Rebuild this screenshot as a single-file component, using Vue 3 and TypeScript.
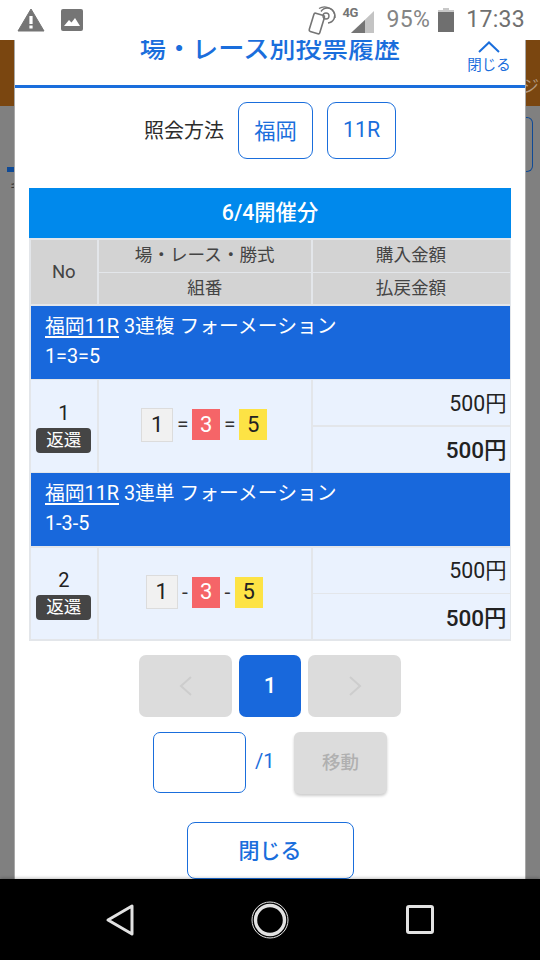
<script setup lang="ts">
interface Row { no: number; kind: string; combo: string; sep: string }
const rows: Row[] = [
  { no: 1, kind: '3連複', combo: '1=3=5', sep: '=' },
  { no: 2, kind: '3連単', combo: '1-3-5', sep: '-' },
]
</script>

<template>
  <div class="phone">
    <header class="status">
      <div class="status-left">
        <svg class="warn" width="28" height="24" viewBox="0 0 28 24"><path d="M14 1 L27 23 H1 Z" fill="#757575" stroke="#757575" stroke-linejoin="round"/><rect x="12.4" y="8" width="3.2" height="8" fill="#fff"/><rect x="12.4" y="17.5" width="3.2" height="3" fill="#fff"/></svg>
        <svg width="22" height="22" viewBox="0 0 22 22"><rect width="22" height="22" rx="2" fill="#757575"/><path d="M3 17 L8 11 L10.5 13.5 L14 9 L19 17 Z" fill="#fff"/></svg>
      </div>
      <div class="status-right">
        <svg class="nfc" width="30" height="30" viewBox="0 0 30 30" fill="none" stroke="#757575"><rect x="4.5" y="8" width="11" height="19" rx="1.5" transform="rotate(17 10 17)" stroke-width="1.6"/><circle cx="19" cy="10" r="3" stroke-width="1.4"/><path d="M14 5.5 A7.5 7.5 0 1 1 21 17" stroke-width="1.4"/><path d="M12 2.5 A10.5 10.5 0 0 1 28 12" stroke-width="1.2"/></svg>
        <div class="signal">
          <span class="lte">4G</span>
          <svg width="23" height="22" viewBox="0 0 23 22"><path d="M23 0 V22 H0 Z" fill="#c4c4c4"/><path d="M14 9 V22 H0 Z" fill="#757575"/></svg>
        </div>
        <span class="pct">95%</span>
        <svg width="16" height="24" viewBox="0 0 16 24"><rect x="5" width="6" height="3" fill="#c8c8c8"/><rect y="2" width="16" height="3" fill="#c8c8c8"/><rect y="4" width="16" height="20" fill="#6f6f6f"/></svg>
        <span class="time">17:33</span>
      </div>
    </header>

    <main class="page">
      <div class="hero"><span class="hero-text">ジ</span></div>
      <div class="under">
        <div class="under-left"><i class="mark"></i><span class="mark-text">キ</span></div>
        <div class="under-box"></div>
      </div>

      <section class="modal">
        <div class="modal-head">
          <h1 class="title">場・レース別投票履歴</h1>
          <button class="head-close">
            <svg width="22" height="12" viewBox="0 0 22 12" fill="none"><path d="M1 11 L11 1.5 L21 11" stroke="#1a6edc" stroke-width="2"/></svg>
            <span>閉じる</span>
          </button>
        </div>

        <div class="filter">
          <span class="filter-label">照会方法</span>
          <button class="filter-btn wide">福岡</button>
          <button class="filter-btn narrow">11R</button>
        </div>

        <h2 class="table-title">6/4開催分</h2>
        <div class="table">
          <div class="th no-head">No</div>
          <div class="th">場・レース・勝式</div>
          <div class="th">購入金額</div>
          <div class="th">組番</div>
          <div class="th">払戻金額</div>

          <template v-for="r in rows" :key="r.no">
            <div class="race">
              <div><u>福岡11R</u> {{ r.kind }} フォーメーション</div>
              <div>{{ r.combo }}</div>
            </div>
            <div class="td no-cell">
              <span class="no">{{ r.no }}</span>
              <span class="badge">返還</span>
            </div>
            <div class="td combo" :class="r.sep === '=' ? 'eq' : 'dash'">
              <span class="box b1">1</span>
              <span class="sep">{{ r.sep }}</span>
              <span class="box b3">3</span>
              <span class="sep">{{ r.sep }}</span>
              <span class="box b5">5</span>
            </div>
            <div class="td money">500円</div>
            <div class="td money strong">500円</div>
          </template>
        </div>

        <nav class="pager">
          <button class="pg arrow">
            <svg width="14" height="22" viewBox="0 0 14 22" fill="none"><path d="M12 2 L2 11 L12 20" stroke="#cdcdcd" stroke-width="2"/></svg>
          </button>
          <button class="pg current">1</button>
          <button class="pg arrow">
            <svg width="14" height="22" viewBox="0 0 14 22" fill="none"><path d="M2 2 L12 11 L2 20" stroke="#cdcdcd" stroke-width="2"/></svg>
          </button>
        </nav>

        <div class="jump">
          <div class="jump-input"></div>
          <span class="jump-total">/1</span>
          <button class="jump-btn">移動</button>
        </div>

        <button class="close-btn">閉じる</button>
      </section>
    </main>

    <footer class="nav">
      <div class="nav-slot">
        <svg width="30" height="34" viewBox="0 0 30 34" fill="none"><path d="M27 3 V31 L3 17 Z" stroke="#e2e2e2" stroke-width="3" stroke-linejoin="round"/></svg>
      </div>
      <div class="nav-slot">
        <svg width="38" height="38" viewBox="0 0 38 38" fill="none"><circle cx="19" cy="19" r="18" stroke="#e8e8e8" stroke-width="1"/><circle cx="19" cy="19" r="14.5" stroke="#e2e2e2" stroke-width="3.4"/></svg>
      </div>
      <div class="nav-slot">
        <svg width="28" height="30" viewBox="0 0 28 30" fill="none"><rect x="1.5" y="1.5" width="25" height="26" rx="1.5" stroke="#e2e2e2" stroke-width="3"/></svg>
      </div>
    </footer>
  </div>
</template>

<style>
html, body { margin: 0; padding: 0; }
</style>

<style scoped>
* { box-sizing: border-box; }
button { font-family: inherit; padding: 0; margin: 0; background: none; border: 0; }
.phone {
  width: 540px; height: 960px; display: flex; flex-direction: column; overflow: hidden;
  font-family: Roboto, "Noto Sans CJK JP", sans-serif; background: #fff;
}
.status {
  height: 40px; flex: none; display: flex; justify-content: space-between; align-items: center;
  padding: 0 15px 0 17px; background: #fff; font-family: Roboto, sans-serif;
}
.status-left { display: flex; align-items: center; gap: 16px; }
.status-right { display: flex; align-items: center; }
.nfc { margin-right: 7px; margin-top: 1px; }
.signal { position: relative; width: 30px; height: 26px; margin-right: 13px; display: flex; justify-content: flex-end; align-items: flex-end; }
.lte { position: absolute; left: -1px; top: -1px; font-size: 13px; line-height: 13px; font-weight: 700; color: #757575; letter-spacing: -.5px; }
.pct { font-size: 23px; line-height: 26px; color: #858585; margin-right: 8px; letter-spacing: .3px; }
.time { font-size: 23px; line-height: 26px; color: #707070; margin-left: 12px; letter-spacing: .3px; }

.page { position: relative; flex: 1; min-height: 0; background: #808080; display: flex; flex-direction: column; }
.hero { height: 66px; background: #7a4610; display: flex; justify-content: flex-end; align-items: flex-end; }
.hero-text { font-size: 17px; line-height: 24px; color: #b49a80; padding: 0 1px 8px 0; }
.under { display: flex; justify-content: space-between; padding: 11px 7px 0 7px; }
.under-left { display: flex; flex-direction: column; align-items: flex-start; padding-top: 50px; }
.mark { display: block; width: 7px; height: 5px; background: #0f4a96; }
.mark-text { font-size: 12px; line-height: 18px; color: #333; margin: 6px 0 0 3px; }
.under-box { width: 7px; height: 55px; border: 1.5px solid #0f4a96; border-left: 0; border-radius: 0 6px 6px 0; }

.modal {
  position: absolute; left: 14px; right: 14px; top: 0; bottom: 0; background: #fff; overflow: hidden;
  display: flex; flex-direction: column; align-items: center; border-left: 1px solid #a8a8a8; border-right: 1px solid #a8a8a8;
}
.modal-head {
  width: 100%; height: 48px; flex: none; position: relative; display: flex; justify-content: center;
  border-bottom: 3px solid #1a6edc;
}
.title { margin: -9px 0 0; font-size: 26.2px; line-height: 36px; font-weight: 500; color: #1a6edc; white-space: nowrap; }
.head-close {
  position: absolute; top: 1px; right: 14px; width: 44px; display: flex; flex-direction: column; align-items: center;
  gap: 3px; color: #1a6edc; font-size: 14.5px; line-height: 20px;
}
.filter { width: 100%; display: flex; align-items: center; justify-content: center; margin-top: 14px; }
.filter-label { font-size: 20px; line-height: 30px; color: #2c2c2c; margin-right: 14px; }
.filter-btn {
  height: 57px; padding-bottom: 3px; border: 1.5px solid #1a6edc; border-radius: 9px; color: #1a6edc; font-size: 21.3px; background: #fff;
}
.wide { width: 75px; margin-right: 14px; }
.narrow { width: 69px; }

.table-title {
  width: 482px; height: 50px; flex: none; margin: 29px 0 0; background: #0089ec; color: #fff;
  font-size: 21.3px; font-weight: 500; line-height: 50px; text-align: center;
}
.table {
  width: 482px; flex: none; display: grid; background: #e3e6ea; padding: 1.5px; gap: 1.5px;
  grid-template-columns: 66.5px 212.5px 1fr;
  grid-template-rows: 32px 31px 73px 45px 45px 73px 45px 45px;
}
.th {
  background: #d3d3d3; color: #444; font-size: 17.6px; display: flex; align-items: center; justify-content: center; line-height: 1;
}
.no-head { grid-row: span 2; font-size: 18.5px; }
.race {
  grid-column: 1 / -1; background: #1868dc; color: #fff; padding: 6px 0 0 14.5px; font-size: 19.8px; line-height: 30px;
}
.race u { text-underline-offset: 3px; text-decoration-thickness: 1.5px; }
.td { background: #eaf2fe; color: #222; }
.no-cell { grid-row: span 2; display: flex; flex-direction: column; align-items: center; justify-content: center; padding-top: 1px; }
.no { font-size: 20px; line-height: 26px; }
.badge {
  width: 55px; height: 25px; margin-top: 2px; background: #454545; border-radius: 4px; color: #fff;
  font-size: 17.6px; line-height: 24px; text-align: center;
}
.combo { grid-row: span 2; display: flex; align-items: center; justify-content: center; padding: 0 1px 2px 0; }
.box { display: flex; align-items: center; justify-content: center; font-size: 22px; line-height: 1; height: 31px; width: 28px; }
.b1 { width: 32px; height: 34px; background: #f1f1f1; border: 1.5px solid #dcdcdc; }
.b3 { background: #f56568; color: #fff; }
.b5 { background: #fde345; color: #222; }
.sep { text-align: center; font-size: 21px; line-height: 1; color: #333; }
.eq .sep { width: 19px; }
.dash .sep { width: 14.5px; }
.money { display: flex; align-items: center; justify-content: flex-end; padding: 0 3px 3px 0; font-size: 21.3px; }
.strong { font-size: 22.5px; font-weight: 500; padding-bottom: 2px; }

.pager { display: flex; gap: 7px; margin-top: 14px; }
.pg { height: 62px; border-radius: 7px; display: flex; align-items: center; justify-content: center; }
.arrow { width: 93px; background: #dcdcdc; }
.current { width: 62px; background: #1868dc; color: #fff; font-size: 22px; font-weight: 500; }

.jump { display: flex; align-items: center; margin-top: 15px; width: 100%; padding-left: 138px; }
.jump-input { width: 93px; height: 61px; border: 1.5px solid #1a6edc; border-radius: 7px; background: #fff; }
.jump-total { width: 48px; padding: 0 0 3px 9px; font-size: 20px; color: #1a6edc; }
.jump-btn {
  width: 93px; height: 62px; padding-bottom: 3px; background: #dcdcdc; border-radius: 6px; color: #b0b0b0; font-size: 18.5px; font-weight: 500;
  box-shadow: 0 2px 3px rgba(0, 0, 0, .2);
}
.close-btn {
  width: 167px; height: 57px; flex: none; margin-top: 28px; padding-bottom: 3px; border: 1.5px solid #1a6edc; border-radius: 8px; background: #fff;
  color: #1a6edc; font-size: 21px; font-weight: 500;
}
.nav {
  position: relative; height: 81px; flex: none; background: #000; display: flex; justify-content: center; align-items: center;
  box-shadow: 0 -1px 3px rgba(0, 0, 0, .25);
}
.nav-slot { width: 150px; display: flex; justify-content: center; align-items: center; }
</style>
